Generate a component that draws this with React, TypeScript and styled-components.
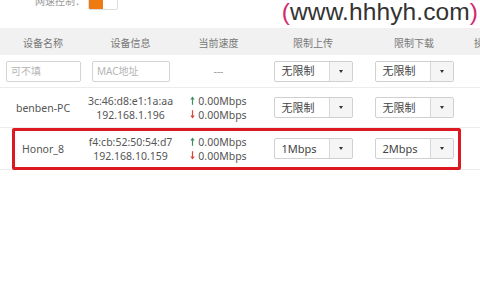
import React from "react";
import styled, { createGlobalStyle } from "styled-components";

const Global = createGlobalStyle`
  html, body { margin: 0; padding: 0; background: #fff; }
  body {
    width: 480px; height: 300px; overflow: hidden;
    font-family: "Noto Sans", "Noto Sans CJK SC", sans-serif;
    color: #555;
  }
`;

const Page = styled.div`
  width: 480px;
  height: 300px;
  overflow: hidden;
  display: flex;
  flex-direction: column;
`;

const TopBar = styled.div`
  height: 28px;
  display: flex;
  justify-content: space-between;
  align-items: flex-start;
`;

const Control = styled.div`
  display: flex;
  align-items: center;
  gap: 3px;
  margin-top: -10px;
  padding-left: 35px;
  font-size: 10px;
  color: #999;
  font-family: "Noto Sans CJK SC", sans-serif;
`;

const Toggle = styled.div`
  width: 30px;
  height: 20px;
  display: flex;
  box-sizing: border-box;
  border: 1px solid #ddd;
  border-radius: 2px;
  overflow: hidden;
  background: #fff;
`;

const ToggleOn = styled.div`
  width: 14px;
  background: #f07a12;
`;

const Watermark = styled.div`
  font-family: "Liberation Sans", sans-serif;
  font-size: 24.5px;
  line-height: 1;
  color: #333;
  padding-right: 2px;
  margin-top: 0px;
  letter-spacing: 0.1px;
`;

const Paren = styled.span`
  color: #d42a6c;
`;

const cols = "86px 89px 87px 102px 100px 1fr";

const HeaderRow = styled.div`
  display: grid;
  grid-template-columns: ${cols};
  height: 27px;
  background: #f1f1f1;
  align-items: center;
  font-size: 10px;
  color: #777;
  font-family: "Noto Sans CJK SC", sans-serif;
`;

const HeadCell = styled.div<{ $left?: boolean }>`
  text-align: ${(p) => (p.$left ? "left" : "center")};
  padding-left: ${(p) => (p.$left ? "10px" : "0")};
  white-space: nowrap;
  overflow: hidden;
  margin-top: 1px;
`;

const Row = styled.div<{ $h: number }>`
  position: relative;
  display: grid;
  grid-template-columns: ${cols};
  height: ${(p) => p.$h}px;
  align-items: center;
  border-bottom: 1px solid #ececec;
  box-sizing: border-box;
  font-size: 10.5px;
  color: #555;
`;

const Cell = styled.div<{ $pl?: number }>`
  display: flex;
  flex-direction: column;
  align-items: ${(p) => (p.$pl !== undefined ? "flex-start" : "center")};
  padding-left: ${(p) => p.$pl ?? 0}px;
  line-height: 14px;
  white-space: nowrap;
`;

const Input = styled.div<{ $w: number }>`
  width: ${(p) => p.$w}px;
  height: 21px;
  box-sizing: border-box;
  border: 1px solid #d4d4d4;
  border-radius: 2px;
  font-size: 10px;
  color: #b5b5b5;
  padding-left: 4px;
  display: flex;
  align-items: center;
  font-family: "Noto Sans", "Noto Sans CJK SC", sans-serif;
`;

const Dashes = styled.span`
  color: #999;
  font-size: 10px;
`;

const Select = styled.div`
  width: 79px;
  height: 21px;
  box-sizing: border-box;
  border: 1px solid #d0d0d0;
  border-radius: 2px;
  display: flex;
  overflow: hidden;
  background: #fff;
`;

const SelectText = styled.div`
  flex: 1;
  display: flex;
  align-items: center;
  padding-left: 7px;
  font-size: 11px;
  color: #444;
  font-family: "Noto Sans", "Noto Sans CJK SC", sans-serif;
`;

const SelectBtn = styled.div`
  width: 22px;
  border-left: 1px solid #d8d8d8;
  background: #f5f5f5;
  display: flex;
  align-items: center;
  justify-content: center;
`;

const Caret = styled.div`
  width: 0;
  height: 0;
  border-left: 2px solid transparent;
  border-right: 2px solid transparent;
  border-top: 3px solid #333;
`;

const SpeedLine = styled.div`
  display: flex;
  align-items: center;
  gap: 3px;
`;

const Highlight = styled.div`
  position: absolute;
  left: 12px;
  right: 19px;
  top: 0;
  bottom: -1px;
  border: 3px solid #dc1820;
  border-radius: 2px;
  pointer-events: none;
`;

const Arrow = ({ up }: { up: boolean }) => (
  <svg width="5" height="9" viewBox="0 0 5 9">
    {up ? (
      <>
        <path d="M2.5 0.5 L0.3 3.5 H4.7 Z" fill="#3b8f5a" />
        <rect x="1.9" y="3" width="1.2" height="5.8" fill="#3b8f5a" />
      </>
    ) : (
      <>
        <rect x="1.9" y="0.2" width="1.2" height="5.8" fill="#d9443f" />
        <path d="M2.5 8.5 L0.3 5.5 H4.7 Z" fill="#d9443f" />
      </>
    )}
  </svg>
);

const Dropdown = ({ value }: { value: string }) => (
  <Select>
    <SelectText>{value}</SelectText>
    <SelectBtn>
      <Caret />
    </SelectBtn>
  </Select>
);

const Speed = () => (
  <Cell>
    <SpeedLine>
      <Arrow up />
      0.00Mbps
    </SpeedLine>
    <SpeedLine>
      <Arrow up={false} />
      0.00Mbps
    </SpeedLine>
  </Cell>
);

const devices = [
  { name: "benben-PC", mac: "3c:46:d8:e1:1a:aa", ip: "192.168.1.196", up: "无限制", down: "无限制", h: 40, mark: false },
  { name: "Honor_8", mac: "f4:cb:52:50:54:d7", ip: "192.168.10.159", up: "1Mbps", down: "2Mbps", h: 42, mark: true },
];

export default function App() {
  return (
    <Page>
      <Global />
      <TopBar>
        <Control>
          网速控制：
          <Toggle>
            <ToggleOn />
          </Toggle>
        </Control>
        <Watermark>
          <Paren>(</Paren>www.hhhyh.com<Paren>)</Paren>
        </Watermark>
      </TopBar>
      <HeaderRow>
        <HeadCell>设备名称</HeadCell>
        <HeadCell>设备信息</HeadCell>
        <HeadCell>当前速度</HeadCell>
        <HeadCell>限制上传</HeadCell>
        <HeadCell>限制下载</HeadCell>
        <HeadCell $left>操作</HeadCell>
      </HeaderRow>
      <Row $h={33}>
        <Cell $pl={6}>
          <Input $w={75}>可不填</Input>
        </Cell>
        <Cell $pl={6}>
          <Input $w={78}>MAC地址</Input>
        </Cell>
        <Cell>
          <Dashes>---</Dashes>
        </Cell>
        <Cell>
          <Dropdown value="无限制" />
        </Cell>
        <Cell>
          <Dropdown value="无限制" />
        </Cell>
        <Cell />
      </Row>
      {devices.map((d) => (
        <Row $h={d.h} key={d.name}>
          <Cell>{d.name}</Cell>
          <Cell>
            <span>{d.mac}</span>
            <span>{d.ip}</span>
          </Cell>
          <Speed />
          <Cell>
            <Dropdown value={d.up} />
          </Cell>
          <Cell>
            <Dropdown value={d.down} />
          </Cell>
          <Cell />
          {d.mark && <Highlight />}
        </Row>
      ))}
    </Page>
  );
}
